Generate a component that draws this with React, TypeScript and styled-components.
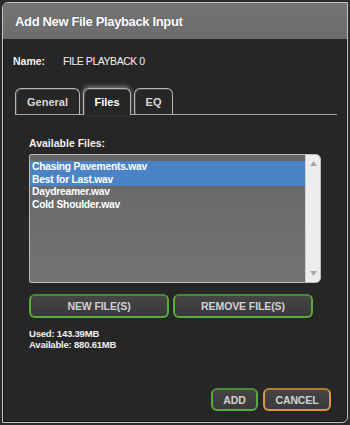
import styled, {createGlobalStyle} from "styled-components";

const GlobalStyle = createGlobalStyle`
    html, body {
        margin: 0;
        padding: 0;
        background: #2c2c2c;
        font-family: "Liberation Sans", Arial, sans-serif;
    }
`

const files = [
    {name: 'Chasing Pavements.wav', selected: true},
    {name: 'Best for Last.wav', selected: true},
    {name: 'Daydreamer.wav', selected: false},
    {name: 'Cold Shoulder.wav', selected: false},
]

const tabs = [
    {label: 'General', width: 65},
    {label: 'Files', width: 48},
    {label: 'EQ', width: 39},
]

export default function App() {
    return (
        <>
            <GlobalStyle/>
            <StyledDialog>
                <StyledTitleBar>Add New File Playback Input</StyledTitleBar>
                <StyledBody>
                    <StyledNameRow>
                        <StyledNameLabel>Name:</StyledNameLabel>
                        <StyledNameValue>FILE PLAYBACK 0</StyledNameValue>
                    </StyledNameRow>

                    <StyledTabStrip>
                        {tabs.map(t => (
                            <StyledTab key={t.label} $width={t.width} $active={t.label === 'Files'}>{t.label}</StyledTab>
                        ))}
                    </StyledTabStrip>

                    <StyledPanel>
                        <StyledSectionLabel>Available Files:</StyledSectionLabel>
                        <StyledList>
                            <StyledItems>
                                {files.map(f => (
                                    <StyledItem key={f.name} $selected={f.selected}>{f.name}</StyledItem>
                                ))}
                            </StyledItems>
                            <StyledScrollbar>
                                <svg width="7" height="5" viewBox="0 0 7 5">
                                    <path d="M0 5 L3.5 0 L7 5 Z" fill="#a8a8a8"/>
                                </svg>
                                <svg width="7" height="5" viewBox="0 0 7 5">
                                    <path d="M0 0 L3.5 5 L7 0 Z" fill="#a8a8a8"/>
                                </svg>
                            </StyledScrollbar>
                        </StyledList>

                        <StyledButtonRow>
                            <StyledButton $accent="green" $width="140px">NEW FILE(S)</StyledButton>
                            <StyledButton $accent="green" $width="140px">REMOVE FILE(S)</StyledButton>
                        </StyledButtonRow>

                        <StyledUsage>
                            <div>Used: 143.39MB</div>
                            <div>Available: 880.61MB</div>
                        </StyledUsage>
                    </StyledPanel>

                    <StyledFooter>
                        <StyledButton $accent="green" $width="47px" $height="23px">ADD</StyledButton>
                        <StyledButton $accent="orange" $width="68px" $height="23px">CANCEL</StyledButton>
                    </StyledFooter>
                </StyledBody>
            </StyledDialog>
        </>
    )
}

const StyledDialog = styled.div`
    box-sizing: border-box;
    margin: 2px 0 0 2px;
    width: 346px;
    height: 421px;
    display: flex;
    flex-direction: column;
    background: #262626;
    border: 1px solid #c4c4c4;
    border-radius: 6px 0 6px 0;
    box-shadow: inset 0 0 0 1px #161616;
    overflow: hidden;
`

const StyledTitleBar = styled.div`
    height: 36px;
    display: flex;
    align-items: center;
    padding-left: 12px;
    background: linear-gradient(#747474, #6c6c6c);
    color: #ffffff;
    font-weight: 700;
    font-size: 13px;
    letter-spacing: -0.35px;
    text-shadow: 0 0 1px rgba(0, 0, 0, 0.4);
`

const StyledBody = styled.div`
    flex: 1;
    display: flex;
    flex-direction: column;
    padding: 15px 10px 11px 10px;
`

const StyledNameRow = styled.div`
    display: flex;
    align-items: center;
    height: 14px;
    color: #f2f2f2;
`

const StyledNameLabel = styled.span`
    width: 50px;
    font-weight: 700;
    font-size: 10.5px;
`

const StyledNameValue = styled.span`
    font-size: 10.5px;
    letter-spacing: -0.45px;
`

const StyledTabStrip = styled.div`
    display: flex;
    align-items: flex-end;
    gap: 3px;
    margin: 20px 0 0 2px;
    height: 26px;
    border-bottom: 1px solid #a9a9a9;
`

const StyledTab = styled.div<{ $active?: boolean, $width: number }>`
    box-sizing: border-box;
    width: ${p => p.$width}px;
    height: ${p => p.$active ? '27px' : '26px'};
    margin-bottom: ${p => p.$active ? '-1px' : '0'};
    display: flex;
    align-items: center;
    justify-content: center;
    background: #262626;
    border: 1px solid #b5b5b5;
    border-bottom: none;
    border-radius: 6px 6px 0 0;
    box-shadow: inset 1px 1px 0 #4a4a4a,
        ${p => p.$active ? '0 -2px 4px rgba(255, 255, 255, 0.35)' : '0 0 0 transparent'};
    color: ${p => p.$active ? '#ffffff' : '#d8d8d8'};
    font-weight: 700;
    font-size: 11px;
`

const StyledPanel = styled.div`
    display: flex;
    flex-direction: column;
    padding-left: 16px;
`

const StyledSectionLabel = styled.div`
    margin-top: 22px;
    height: 12px;
    line-height: 12px;
    color: #f0f0f0;
    font-weight: 700;
    font-size: 10.5px;
`

const StyledList = styled.div`
    box-sizing: border-box;
    margin-top: 5px;
    width: 292px;
    height: 129px;
    display: flex;
    background: linear-gradient(#676767, #737373);
    border: 1px solid #bdbdbd;
    border-radius: 2px 5px 5px 2px;
    overflow: hidden;
`

const StyledItems = styled.div`
    flex: 1;
    padding-top: 6px;
`

const StyledItem = styled.div<{ $selected?: boolean }>`
    height: 12.7px;
    line-height: 12.7px;
    padding-left: 2px;
    background: ${p => p.$selected ? '#4a84c6' : 'transparent'};
    color: #ffffff;
    font-weight: 700;
    font-size: 10.3px;
    letter-spacing: -0.25px;
`

const StyledScrollbar = styled.div`
    width: 14px;
    display: flex;
    flex-direction: column;
    align-items: center;
    justify-content: space-between;
    padding: 6px 0 6px;
    background: #ededed;
    border-left: 1px solid #d0d0d0;
`

const StyledButtonRow = styled.div`
    display: flex;
    gap: 4px;
    margin-top: 11px;
`

const StyledButton = styled.div<{ $accent: 'green' | 'orange', $width: string, $height?: string }>`
    box-sizing: border-box;
    width: ${p => p.$width};
    height: ${p => p.$height || '24px'};
    display: flex;
    align-items: center;
    justify-content: center;
    background: linear-gradient(#454545, #3a3a3a);
    border: 2px solid ${p => p.$accent === 'green' ? '#5bab3c' : '#d99a3c'};
    border-top-color: ${p => p.$accent === 'green' ? '#4a8a33' : '#b07d30'};
    border-radius: 6px;
    color: #d2d2d2;
    font-weight: 700;
    font-size: 10.5px;
    letter-spacing: -0.1px;
`

const StyledUsage = styled.div`
    margin-top: 10px;
    color: #f0f0f0;
    font-weight: 700;
    font-size: 9.5px;
    letter-spacing: -0.2px;
    line-height: 11px;
`

const StyledFooter = styled.div`
    margin-top: auto;
    display: flex;
    justify-content: flex-end;
    gap: 5px;
    padding-right: 6px;
`
